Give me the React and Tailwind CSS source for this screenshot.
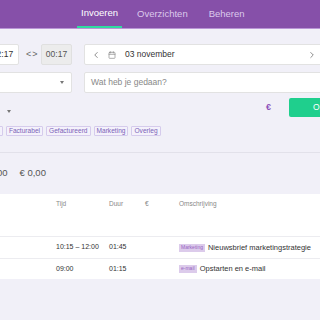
import React from 'react';
import { ChevronLeft, ChevronRight, Calendar } from 'lucide-react';

const tags = ['Intern', 'Facturabel', 'Gefactureerd', 'Marketing', 'Overleg'];

function Caret() {
  return <span className="inline-block w-0 h-0 border-l-[2.5px] border-r-[2.5px] border-t-[3px] border-l-transparent border-r-transparent border-t-[#777]" />;
}

export default function App() {
  return (
    <div className="w-[320px] h-[320px] overflow-hidden bg-[#f1f0f8] text-[#333] whitespace-nowrap" style={{ fontFamily: '"Liberation Sans", Arial, sans-serif' }}>
      {/* top bar */}
      <div className="h-[29px] bg-[#8650a9] border-b border-[#b995d6] flex items-end pl-[77px]">
        <div className="w-[45px] h-[28px] flex items-center justify-center text-[9.5px] text-white border-b-2 border-[#2fdca0]">Invoeren</div>
        <div className="ml-[15px] h-[28px] flex items-center text-[9.5px] text-[#dcc9ec]">Overzichten</div>
        <div className="ml-[21px] h-[28px] flex items-center text-[9.5px] text-[#dcc9ec]">Beheren</div>
      </div>

      {/* row 1 */}
      <div className="flex items-center mt-[15px] h-[21px]">
        <div className="ml-[-14px] w-[33px] h-full shrink-0 bg-white border border-[#e2e2e2] rounded-[2px] flex items-center justify-center text-[8.5px]">12:17</div>
        <div className="ml-[7px] w-[10px] shrink-0 text-[9px] text-[#666] tracking-[1px]">&lt;&gt;</div>
        <div className="ml-[5px] w-[31px] h-full shrink-0 bg-[#ececec] border border-[#e0e0e0] rounded-[2px] flex items-center justify-center text-[8.5px] text-[#555]">00:17</div>
        <div className="ml-[12px] w-[240px] h-full bg-white border border-[#e2e2e2] rounded-[2px] flex items-center text-[8.5px] shrink-0">
          <ChevronLeft size={10} strokeWidth={1.6} className="ml-[6px] text-[#555]" />
          <Calendar size={8} strokeWidth={2} className="ml-[7px] text-[#888]" />
          <span className="ml-[9px]">03 november</span>
          <ChevronRight size={10} strokeWidth={1.6} className="ml-auto mr-[6px] text-[#555]" />
        </div>
      </div>

      {/* row 2 */}
      <div className="flex items-center mt-[7px] h-[21px]">
        <div className="ml-[-10px] w-[82px] h-full shrink-0 bg-white border border-[#e2e2e2] rounded-[2px] flex items-center justify-end pr-[7px]">
          <Caret />
        </div>
        <div className="ml-[12px] w-[240px] h-full bg-white border border-[#e2e2e2] rounded-[2px] flex items-center pl-[6px] text-[8.5px] text-[#888] shrink-0">Wat heb je gedaan?</div>
      </div>

      {/* row 3 */}
      <div className="flex items-center mt-[5px] h-[19px]">
        <div className="ml-[7px] shrink-0"><Caret /></div>
        <div className="ml-[255px] shrink-0 text-[9px] font-bold text-[#8b4fb8]">€</div>
        <div className="ml-[18px] w-[60px] h-full bg-[#1fcf8d] rounded-[2px] flex items-center pl-[24px] text-[8.5px] text-white shrink-0">Opslaan</div>
      </div>

      {/* tags */}
      <div className="flex items-center mt-[9px] h-[10px] ml-[-20px] gap-[3px]">
        {tags.map((t) => (
          <span key={t} className="h-[10px] px-[2px] border border-[#d5cbec] bg-[#f4f1fb] rounded-[1px] flex items-center text-[6.6px] text-[#7a63b8] shrink-0">{t}</span>
        ))}
      </div>

      <div className="mt-[16px] h-px bg-[#e2e1ea]" />

      {/* totals */}
      <div className="flex items-center h-[41px] text-[9.5px] text-[#555]">
        <span className="ml-[-11px] shrink-0">0,00</span>
        <span className="ml-[12px] shrink-0">€ 0,00</span>
      </div>

      {/* table */}
      <div className="bg-white h-[85px]">
        <div className="h-[42px] flex pt-[5px] text-[6.5px] text-[#888]">
          <span className="ml-[56px] w-[53px] shrink-0">Tijd</span>
          <span className="w-[36px] shrink-0">Duur</span>
          <span className="w-[34px] shrink-0">€</span>
          <span className="shrink-0">Omschrijving</span>
        </div>
        <div className="h-[22px] border-t border-[#ececf0] flex items-center text-[7px] text-[#333]">
          <span className="ml-[56px] w-[53px] shrink-0">10:15 – 12:00</span>
          <span className="w-[70px] shrink-0">01:45</span>
          <span className="h-[8px] px-[2px] shrink-0 bg-[#dccbeb] text-[#9865c2] text-[5px] flex items-center">Marketing</span>
          <span className="ml-[3px] shrink-0 text-[7.5px]">Nieuwsbrief marketingstrategie</span>
        </div>
        <div className="h-[21px] border-t border-[#ececf0] flex items-center text-[7px] text-[#333]">
          <span className="ml-[56px] w-[53px] shrink-0">09:00</span>
          <span className="w-[70px] shrink-0">01:15</span>
          <span className="h-[8px] px-[2px] shrink-0 bg-[#dccbeb] text-[#9865c2] text-[5px] flex items-center">e-mail</span>
          <span className="ml-[3px] shrink-0 text-[7.5px]">Opstarten en e-mail</span>
        </div>
      </div>

      <div className="mt-[41px] h-px bg-[#a9a8ae]" />
    </div>
  );
}
